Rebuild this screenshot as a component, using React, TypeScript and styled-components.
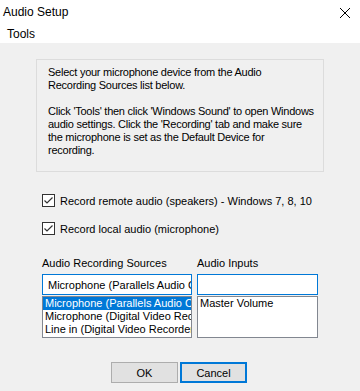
import React from "react";
import styled, { createGlobalStyle } from "styled-components";

const Global = createGlobalStyle`
  html, body { margin: 0; padding: 0; }
  body {
    width: 360px;
    height: 391px;
    overflow: hidden;
    background: #f0f0f0;
    font-family: "Liberation Sans", Arial, sans-serif;
    font-size: 11px;
    color: #000;
  }
`;

const Window = styled.div`
  width: 360px;
  height: 391px;
  display: flex;
  flex-direction: column;
  background: #f0f0f0;
`;

const TitleBar = styled.div`
  height: 24px;
  background: #fff;
  display: flex;
  align-items: center;
  justify-content: space-between;
  padding: 0 10px 0 3px;
  font-size: 12px;
`;

const CloseIcon = styled.svg`
  width: 10px;
  height: 10px;
  margin-top: 1px;
`;

const MenuBar = styled.div`
  height: 19px;
  background: #fff;
  display: flex;
  align-items: center;
  padding-left: 7px;
  font-size: 12px;
`;

const Body = styled.div`
  display: flex;
  flex-direction: column;
  padding: 16px 0 0 36px;
`;

const GroupBox = styled.div`
  box-sizing: border-box;
  width: 288px;
  height: 113px;
  border: 1px solid #dcdcdc;
  padding: 6px 4px 0 11px;
  line-height: 13px;
  white-space: nowrap;
  letter-spacing: -0.25px;
`;

const Para = styled.p`
  margin: 0 0 13px 0;
`;

const CheckRow = styled.label<{ $mt: number }>`
  display: flex;
  align-items: center;
  gap: 5px;
  margin-left: 6px;
  height: 13px;
  margin-top: ${(p) => p.$mt}px;
`;

const Box = styled.span`
  box-sizing: border-box;
  width: 13px;
  height: 13px;
  border: 1px solid #333;
  background: #fff;
  display: flex;
  align-items: center;
  justify-content: center;
`;

const Columns = styled.div`
  display: flex;
  gap: 5px;
  margin: 22px 0 0 6px;
`;

const Column = styled.div<{ $w: number }>`
  display: flex;
  flex-direction: column;
  width: ${(p) => p.$w}px;
`;

const ColLabel = styled.div`
  height: 13px;
  line-height: 13px;
  margin-bottom: 4px;
  white-space: nowrap;
`;

const Combo = styled.div`
  box-sizing: border-box;
  height: 21px;
  border: 1px solid #0078d7;
  background: #fff;
  padding-left: 5px;
  display: flex;
  align-items: center;
  white-space: nowrap;
  overflow: hidden;
`;

const List = styled.div`
  box-sizing: border-box;
  height: 42px;
  margin-top: 1px;
  border: 1px solid #828790;
  background: #fff;
  overflow: hidden;
`;

const Item = styled.div<{ $sel?: boolean }>`
  height: 13px;
  line-height: 13px;
  padding-left: 2px;
  white-space: nowrap;
  overflow: hidden;
  background: ${(p) => (p.$sel ? "#0078d7" : "transparent")};
  color: ${(p) => (p.$sel ? "#fff" : "#000")};
`;

const Buttons = styled.div`
  display: flex;
  gap: 2px;
  margin: 24px 0 0 75px;
`;

const Button = styled.button<{ $default?: boolean }>`
  box-sizing: border-box;
  width: 67px;
  height: 21px;
  background: #e1e1e1;
  border: ${(p) => (p.$default ? "2px solid #0078d7" : "1px solid #adadad")};
  font-family: "Liberation Sans", Arial, sans-serif;
  font-size: 11px;
  color: #000;
  padding: 0;
`;

const Check = () => (
  <svg width="11" height="11" viewBox="0 0 11 11">
    <path d="M1.5 5.5 L4 8 L9.5 2.5" fill="none" stroke="#333" strokeWidth="1.2" />
  </svg>
);

export default function App() {
  return (
    <>
      <Global />
      <Window>
        <TitleBar>
          <span>Audio Setup</span>
          <CloseIcon viewBox="0 0 10 10">
            <path d="M0 0 L10 10 M10 0 L0 10" stroke="#000" strokeWidth="1" />
          </CloseIcon>
        </TitleBar>
        <MenuBar>Tools</MenuBar>
        <Body>
          <GroupBox>
            <Para>
              Select your microphone device from the Audio
              <br />
              Recording Sources list below.
            </Para>
            <Para>
              Click 'Tools' then click 'Windows Sound' to open Windows
              <br />
              audio settings. Click the 'Recording' tab and make sure
              <br />
              the microphone is set as the Default Device for
              <br />
              recording.
            </Para>
          </GroupBox>
          <CheckRow $mt={22}>
            <Box>
              <Check />
            </Box>
            Record remote audio (speakers) - Windows 7, 8, 10
          </CheckRow>
          <CheckRow $mt={15}>
            <Box>
              <Check />
            </Box>
            Record local audio (microphone)
          </CheckRow>
          <Columns>
            <Column $w={150}>
              <ColLabel>Audio Recording Sources</ColLabel>
              <Combo>Microphone (Parallels Audio C</Combo>
              <List>
                <Item $sel>Microphone (Parallels Audio Controller)</Item>
                <Item>Microphone (Digital Video Recorder)</Item>
                <Item>Line in (Digital Video Recorder)</Item>
              </List>
            </Column>
            <Column $w={121}>
              <ColLabel>Audio Inputs</ColLabel>
              <Combo />
              <List>
                <Item>Master Volume</Item>
              </List>
            </Column>
          </Columns>
          <Buttons>
            <Button>OK</Button>
            <Button $default>Cancel</Button>
          </Buttons>
        </Body>
      </Window>
    </>
  );
}
